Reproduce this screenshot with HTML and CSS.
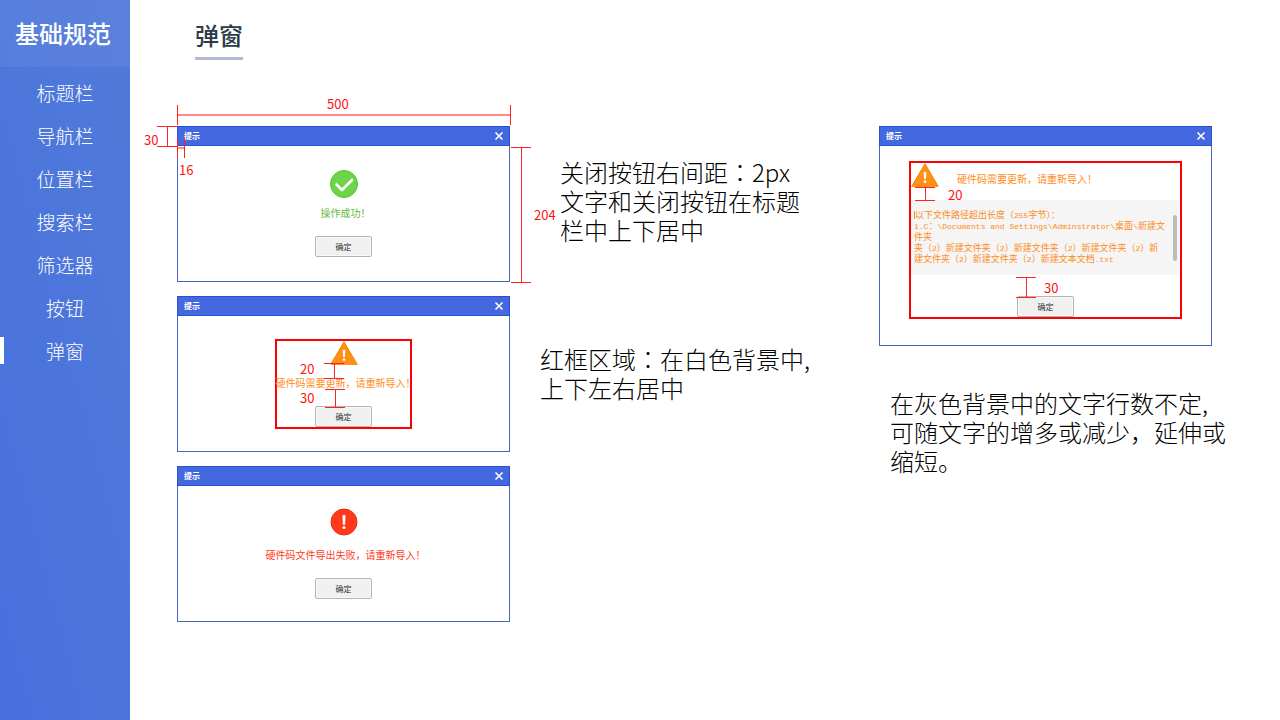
FILE: index.html
```html
<!DOCTYPE html>
<html lang="zh-CN">
<head>
    <meta charset="UTF-8">
    <meta name="viewport" content="width=device-width, initial-scale=1.0">
    <title>基础规范 - 弹窗</title>
    <link rel="stylesheet" href="styles.css">
</head>
<body>
    <aside class="sidebar">
        <div class="sidebar-title">基础规范</div>
        <nav class="nav">
            <a href="#">标题栏</a>
            <a href="#">导航栏</a>
            <a href="#">位置栏</a>
            <a href="#">搜索栏</a>
            <a href="#">筛选器</a>
            <a href="#">按钮</a>
            <a href="#" class="active">弹窗</a>
        </nav>
    </aside>

    <main class="main">
        <h1>弹窗</h1>

        <div class="board">
            <div class="dialogs">
                <!-- success -->
                <section class="dialog">
                    <header class="dialog-header">
                        <h2>提示</h2>
                        <button class="close" aria-label="关闭"><svg viewBox="0 0 10 10"><path d="M.6 .6L9.4 9.4M9.4 .6L.6 9.4"/></svg></button>
                    </header>
                    <div class="dialog-body">
                        <svg class="icon-success" viewBox="0 0 28 28">
                            <circle cx="14" cy="14" r="13.5" fill="#6fd44b" stroke="#51c32d"/>
                            <path d="M6.5 14.5L12 20L22 10" fill="none" stroke="#fff" stroke-width="2.6" stroke-linecap="round" stroke-linejoin="round"/>
                        </svg>
                        <p class="message success">操作成功！</p>
                        <button class="ok">确定</button>
                    </div>
                    <div class="dim-h dim-width"></div>
                    <span class="dim-label label-width">500</span>
                    <div class="dim-v dim-title"></div>
                    <span class="dim-label label-title">30</span>
                    <div class="dim-h dim-indent"></div>
                    <span class="dim-label label-indent">16</span>
                    <div class="dim-v dim-height"></div>
                    <span class="dim-label label-height">204</span>
                </section>

                <!-- warning -->
                <section class="dialog">
                    <header class="dialog-header">
                        <h2>提示</h2>
                        <button class="close" aria-label="关闭"><svg viewBox="0 0 10 10"><path d="M.6 .6L9.4 9.4M9.4 .6L.6 9.4"/></svg></button>
                    </header>
                    <div class="dialog-body">
                        <div class="frame">
                            <svg class="icon-warning" viewBox="0 0 28 24">
                                <path d="M14 .8L27.2 23.3H.8Z" fill="#ff9016" stroke="#f08208" stroke-linejoin="round"/>
                                <path d="M12.6 9h2.8l-.5 7h-1.8zM12.8 17.4h2.4v2.3h-2.4z" fill="#fff"/>
                            </svg>
                            <p class="message warning">硬件码需要更新，请重新导入！</p>
                            <button class="ok">确定</button>
                            <div class="dim-v dim-icon"></div>
                            <span class="dim-label label-icon">20</span>
                            <div class="dim-v dim-button"></div>
                            <span class="dim-label label-button">30</span>
                        </div>
                    </div>
                </section>

                <!-- error -->
                <section class="dialog">
                    <header class="dialog-header">
                        <h2>提示</h2>
                        <button class="close" aria-label="关闭"><svg viewBox="0 0 10 10"><path d="M.6 .6L9.4 9.4M9.4 .6L.6 9.4"/></svg></button>
                    </header>
                    <div class="dialog-body">
                        <svg class="icon-error" viewBox="0 0 28 28">
                            <circle cx="14" cy="14" r="13" fill="#ff3a1c" stroke="#ee2c10"/>
                            <path d="M12.8 7.4h2.4l-.4 9h-1.6z" fill="#fff" stroke="#fff" stroke-width=".6" stroke-linejoin="round"/>
                            <circle cx="14" cy="19.6" r="1.5" fill="#fff"/>
                        </svg>
                        <p class="message error">硬件码文件导出失败，请重新导入！</p>
                        <button class="ok">确定</button>
                    </div>
                </section>
            </div>

            <div class="notes">
                <p class="note note-indent">关闭按钮右间距<span class="colon" lang="zh-TW">：</span>2px<br>文字和关闭按钮在标题<br>栏中上下居中</p>
                <p class="note">红框区域<span class="colon" lang="zh-TW">：</span>在白色背景中,<br>上下左右居中</p>
            </div>

            <div class="side">
                <!-- warning with details -->
                <section class="dialog">
                    <header class="dialog-header">
                        <h2>提示</h2>
                        <button class="close" aria-label="关闭"><svg viewBox="0 0 10 10"><path d="M.6 .6L9.4 9.4M9.4 .6L.6 9.4"/></svg></button>
                    </header>
                    <div class="dialog-body dialog-body-detail">
                        <div class="frame frame-detail">
                            <div class="summary">
                                <svg class="icon-warning" viewBox="0 0 28 24">
                                    <path d="M14 .8L27.2 23.3H.8Z" fill="#ff9016" stroke="#f08208" stroke-linejoin="round"/>
                                    <path d="M12.6 9h2.8l-.5 7h-1.8zM12.8 17.4h2.4v2.3h-2.4z" fill="#fff"/>
                                </svg>
                                <p class="message warning">硬件码需要更新，请重新导入！</p>
                            </div>
                            <div class="detail">
                                <p class="detail-text"><span class="caret"></span>以下文件路径超出长度（<span class="mono">255</span>字节）：<br><span class="mono">1.C</span>：<span class="mono">\Documents and Settings\Adminstrator\</span>桌面<span class="mono">\</span>新建文<br>件夹<br>夹（<span class="mono">2</span>）新建文件夹（<span class="mono">2</span>）新建文件夹（<span class="mono">2</span>）新建文件夹（<span class="mono">2</span>）新<br>建文件夹（<span class="mono">2</span>）新建文件夹（<span class="mono">2</span>）新建文本文档<span class="mono">.txt</span></p>
                                <div class="scroll-thumb"></div>
                            </div>
                            <button class="ok">确定</button>
                            <div class="dim-v dim-icon"></div>
                            <span class="dim-label label-icon">20</span>
                            <div class="dim-v dim-button"></div>
                            <span class="dim-label label-button">30</span>
                        </div>
                    </div>
                </section>
                <p class="note">在灰色背景中的文字行数不定,<br>可随文字的增多或减少，延伸或<br>缩短。</p>
            </div>
        </div>
    </main>
</body>
</html>
```
FILE: styles.css
```css
* {
    box-sizing: border-box;
}
body {
    display: flex;
    min-height: 100vh;
    margin: 0;
    background-color: #fff;
    font-family: "Noto Sans CJK SC", sans-serif;
}
h1, h2, p {
    margin: 0;
}
button {
    padding: 0;
    font-family: inherit;
    cursor: pointer;
}

/* sidebar */
.sidebar {
    flex: 0 0 130px;
    padding-right: 2px;
    background: linear-gradient(75deg, #4870de, #507bd9);
    color: #fff;
}
.sidebar-title {
    height: 67px;
    margin-right: -2px;
    padding-right: 4px;
    line-height: 65px;
    text-align: center;
    font-size: 24px;
    font-weight: 500;
    background-color: rgba(255, 255, 255, 0.06);
}
.nav {
    display: flex;
    flex-direction: column;
    gap: 16px;
    padding-top: 12px;
}
.nav a {
    border-left: 4px solid transparent;
    padding-right: 2px;
    line-height: 27px;
    text-align: center;
    font-size: 19px;
    font-weight: 300;
    color: #fff;
    text-decoration: none;
}
.nav a.active {
    border-left-color: #fff;
}

/* content */
.main {
    flex: 1;
    padding: 16px 54px 0 47px;
}
h1 {
    width: fit-content;
    margin-left: 18px;
    padding-bottom: 4px;
    border-bottom: 3px solid #b4bad4;
    line-height: 37px;
    font-size: 24px;
    font-weight: 500;
    color: #2b3b4b;
}
.board {
    display: grid;
    grid-template-columns: 333px 1fr 347px;
    column-gap: 30px;
    margin-top: 66px;
}
.dialogs {
    display: flex;
    flex-direction: column;
    gap: 14px;
}
.notes {
    display: flex;
    flex-direction: column;
    gap: 100px;
    padding-top: 31px;
}
.note {
    line-height: 29px;
    font-size: 24px;
    font-weight: 300;
    color: #000;
    white-space: nowrap;
}
.note-indent {
    padding-left: 20px;
}
/* the colon sits in the middle of its square */
.colon {
    font-family: "Noto Sans CJK TC", sans-serif;
}
.side .note {
    margin-top: 42px;
    padding-left: 11px;
}

/* dialog */
.dialog {
    position: relative;
    width: 333px;
    border: 1px solid #4a64c4;
    border-top: none;
}
.dialog-header {
    display: flex;
    align-items: center;
    justify-content: space-between;
    height: 20px;
    margin: 0 -1px;
    padding: 0 6px;
    background-color: #4468e0;
    border: 1px solid #2a50d2;
}
.dialog-header h2 {
    font-size: 8px;
    font-weight: 700;
    line-height: 18px;
    color: #fff;
}
.close {
    width: 8px;
    height: 18px;
    border: none;
    background: none;
}
.close svg {
    display: block;
    width: 8px;
    height: 8px;
    margin: auto;
    overflow: visible;
    stroke: #fff;
    stroke-width: 2;
}
.dialog-body {
    display: flex;
    flex-direction: column;
    align-items: center;
    justify-content: center;
    min-height: 135px;
}
.icon-success,
.icon-error {
    width: 28px;
    height: 28px;
}
.icon-warning {
    width: 28px;
    height: 24px;
    flex: none;
}
.message {
    margin: 12px 0 16px;
    padding-left: 4px;
    line-height: 14px;
    font-size: 10px;
    white-space: nowrap;
}
.message.success {
    margin-top: 8px;
}
.success {
    color: #62b83c;
}
.warning {
    color: #ff8c1a;
}
.error {
    color: #ff3a1c;
}
.ok {
    width: 57px;
    height: 21px;
    border: 1px solid #b4b4b4;
    border-radius: 2px;
    background-color: #f0f0f0;
    box-shadow: inset 0 0 0 1px #fafafa;
    font-size: 8px;
    color: #333;
}

/* red frame round the centred area */
.frame {
    position: relative;
    display: flex;
    flex-direction: column;
    align-items: center;
    width: 137px;
    border: 2px solid #f00;
}
.frame .message {
    margin-top: 11px;
}
.dialog-body-detail {
    padding: 15px 0 26px;
}
.frame-detail {
    align-items: stretch;
    width: 273px;
}
.summary {
    display: flex;
    align-items: center;
    gap: 14px;
    margin-bottom: 13px;
}
.summary .message {
    margin: 8px 0 0;
}
.frame-detail .ok {
    align-self: center;
    margin-top: 21px;
}
.detail {
    display: flex;
    justify-content: space-between;
    margin-right: 1px;
    padding: 9px 2px 11px 3px;
    background-color: #f5f5f5;
}
.detail-text {
    line-height: 11px;
    font-size: 9px;
    color: #ff8c1a;
    white-space: nowrap;
}
.caret {
    display: inline-block;
    width: 1px;
    height: 8px;
    vertical-align: -1px;
    background-color: #ff8c1a;
}
.mono {
    font-family: "Liberation Mono", monospace;
    font-size: 8px;
    line-height: 1px;
}
.scroll-thumb {
    width: 4px;
    height: 46px;
    margin-top: 6px;
    border-radius: 2px;
    background-color: #bbb;
}

/* dimension lines */
.dim-v,
.dim-h,
.dim-label {
    position: absolute;
}
.dim-v {
    width: 20px;
    border: solid #f22;
    border-width: 1px 0;
    background: linear-gradient(#f22, #f22) center / 1px 100% no-repeat;
}
.dim-h {
    height: 20px;
    border: solid #f22;
    border-width: 0 1px;
    background: linear-gradient(#f88, #f88) center / 100% 2px no-repeat;
}
.dim-label {
    line-height: 14px;
    font-size: 13px;
    color: #f11;
}
.dim-width {
    top: -21px;
    left: -1px;
    right: -2px;
}
.label-width {
    top: -29px;
    left: 149px;
}
.dim-title {
    top: 0;
    left: -21px;
    height: 21px;
}
.label-title {
    top: 7px;
    left: -34px;
}
.dim-indent {
    top: 12px;
    left: -1px;
    width: 8px;
}
.label-indent {
    top: 37px;
    left: 1px;
}
.dim-height {
    top: 21px;
    bottom: -2px;
    right: -22px;
}
.label-height {
    top: 82px;
    left: 356px;
}
.frame .dim-icon {
    top: 22px;
    left: 47px;
    height: 16px;
}
.frame .label-icon {
    top: 21px;
    left: 23px;
}
.frame .dim-button {
    top: 48px;
    left: 48px;
    height: 19px;
}
.frame .label-button {
    top: 50px;
    left: 23px;
}
.frame-detail .dim-icon {
    top: 24px;
    left: 4px;
    height: 14px;
}
.frame-detail .label-icon {
    top: 25px;
    left: 37px;
}
.frame-detail .dim-button {
    top: 114px;
    left: 105px;
    height: 21px;
}
.frame-detail .label-button {
    top: 118px;
    left: 133px;
}
```
